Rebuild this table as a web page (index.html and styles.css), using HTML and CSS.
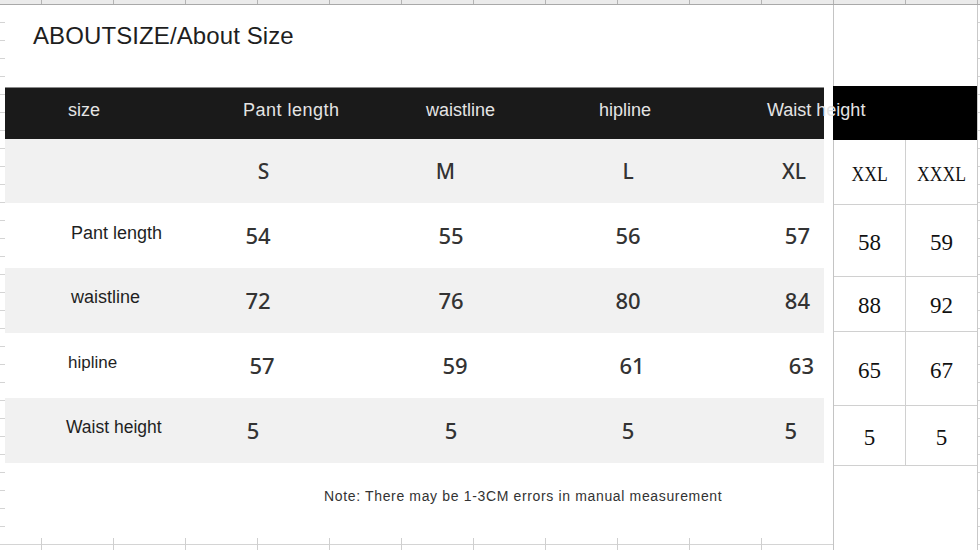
FILE: index.html
```html
<!DOCTYPE html>
<html lang="en">
<head>
<meta charset="utf-8">
<title>About Size</title>
<link rel="stylesheet" href="styles.css">
</head>
<body>
<div class="colhead"></div>
<div class="sheet">
  <section class="chart">
    <h1 class="title">ABOUTSIZE/About Size</h1>
    <div class="thead">
      <span class="th th-size">size</span>
      <span class="th th-pant">Pant length</span>
      <span class="th th-waist">waistline</span>
      <span class="th th-hip">hipline</span>
      <span class="th th-wh">Waist height</span>
    </div>
    <div class="row gray sizes">
      <span class="lab"></span>
      <span class="val">S</span>
      <span class="val">M</span>
      <span class="val">L</span>
      <span class="val last">XL</span>
    </div>
    <div class="row">
      <span class="lab">Pant length</span>
      <span class="val">54</span>
      <span class="val">55</span>
      <span class="val">56</span>
      <span class="val last">57</span>
    </div>
    <div class="row gray">
      <span class="lab">waistline</span>
      <span class="val">72</span>
      <span class="val">76</span>
      <span class="val">80</span>
      <span class="val last">84</span>
    </div>
    <div class="row hip">
      <span class="lab">hipline</span>
      <span class="val">57</span>
      <span class="val">59</span>
      <span class="val">61</span>
      <span class="val last">63</span>
    </div>
    <div class="row gray wh">
      <span class="lab">Waist height</span>
      <span class="val">5</span>
      <span class="val">5</span>
      <span class="val">5</span>
      <span class="val last">5</span>
    </div>
    <p class="note">Note: There may be 1-3CM errors in manual measurement</p>
  </section>
  <section class="side">
    <div class="side-top"></div>
    <div class="side-head"></div>
    <div class="cells">
      <div class="cell r1"><span class="cond">XXL</span></div>
      <div class="cell r1"><span class="cond">XXXL</span></div>
      <div class="cell r2">58</div>
      <div class="cell r2">59</div>
      <div class="cell r3">88</div>
      <div class="cell r3">92</div>
      <div class="cell r4">65</div>
      <div class="cell r4">67</div>
      <div class="cell r5">5</div>
      <div class="cell r5">5</div>
    </div>
  </section>
</div>
</body>
</html>
```

FILE: styles.css
```css
html, body {
  margin: 0;
  padding: 0;
}

body {
  width: 980px;
  height: 550px;
  overflow: hidden;
  background-color: #ffffff;
  background-image:
    linear-gradient(to right, #cfcfcf 1px, transparent 1px),
    linear-gradient(to bottom, #d4d4d4 1px, transparent 1px);
  background-size: 72px 100%, 100% 18px;
  background-position: 41px 0, 0 4px;
  font-family: "Liberation Sans", Arial, sans-serif;
}

.colhead {
  height: 4px;
  border-bottom: 1px solid #a9a9a9;
  background-color: #ebebeb;
  background-image: linear-gradient(to right, #b4b4b4 1px, transparent 1px);
  background-size: 72px 100%;
  background-position: 41px 0;
}

.sheet {
  display: flex;
  align-items: flex-start;
}

/* ---------- size chart picture ---------- */
.chart {
  margin-left: 5px;
  width: 828px;
  height: 533px;
  background: #ffffff;
  display: flex;
  flex-direction: column;
  position: relative;
  z-index: 1;
}

.title {
  margin: 0;
  height: 82px;
  box-sizing: border-box;
  padding: 17px 0 0 28px;
  font-size: 24px;
  line-height: 28px;
  font-weight: 400;
  color: #1e1e1e;
  letter-spacing: 0.1px;
}

.thead {
  width: 819px;
  height: 52px;
  box-sizing: border-box;
  border-top: 1px solid #8a8a8a;
  background: #1a1a1a;
  display: flex;
  align-items: center;
  padding-bottom: 7px;
  white-space: nowrap;
}

.th {
  font-size: 18px;
  line-height: 22px;
  color: #e4e4e4;
  flex: none;
}

.th-size { margin-left: 63px; width: 175px; }
.th-pant { width: 183px; letter-spacing: 0.5px; }
.th-waist { width: 173px; }
.th-hip { width: 168px; }
.th-wh { width: 57px; }

.row {
  width: 819px;
  height: 65px;
  display: grid;
  grid-template-columns: 153px 200px 186px 168px 112px;
  align-items: center;
  background: #ffffff;
}

.row.gray {
  background: #f1f1f1;
}

.row.sizes {
  height: 64px;
}

.lab {
  padding-left: 66px;
  padding-bottom: 5px;
  font-size: 18px;
  line-height: 22px;
  color: #1f1f1f;
  white-space: nowrap;
}

.row.gray .lab { padding-bottom: 7px; }
.row.hip .lab { padding-left: 63px; font-size: 17px; }
.row.wh .lab { padding-left: 61px; font-size: 17.5px; }

.val {
  text-align: center;
  font-family: "Noto Sans", "Open Sans", sans-serif;
  font-size: 22px;
  font-weight: 500;
  line-height: 26px;
  color: #333333;
  padding-bottom: 1px;
}

.row.sizes .val {
  font-size: 21px;
  padding-bottom: 1px;
}

.row.sizes .val:nth-child(2) { padding-left: 11px; }
.row.sizes .val:nth-child(3) { padding-right: 11px; }

.val.last {
  text-align: right;
  padding-right: 14px;
}

.row.hip .val { padding-left: 8px; }
.row.hip .val.last { padding-left: 0; padding-right: 10px; }
.row.sizes .val.last { padding-right: 18px; }
.row.wh .val:nth-child(2) { padding-right: 10px; }
.row.wh .val.last { padding-right: 27px; }

.note {
  margin: 23px 0 0 319px;
  font-size: 14px;
  line-height: 20px;
  letter-spacing: 0.65px;
  color: #333333;
  white-space: nowrap;
}

/* ---------- spreadsheet cells on the right ---------- */
.side {
  width: 143px;
  height: 545px;
  border-left: 1px solid #c4c4c4;
  border-right: 1px solid #c9c9c9;
  background: #ffffff;
  display: flex;
  flex-direction: column;
}

.side-top {
  height: 81px;
}

.side-head {
  height: 54px;
  background: #000000;
  margin-left: -1px;
}

.cells {
  display: grid;
  grid-template-columns: 72px 71px;
  grid-template-rows: 65px 72px 55px 74px 60px;
}

.cell {
  display: flex;
  align-items: center;
  justify-content: center;
  border-bottom: 1px solid #d0d0d0;
  font-family: "Liberation Serif", "Times New Roman", serif;
  font-size: 23px;
  color: #111111;
  padding-top: 4px;
}

.cell:nth-child(odd) {
  border-right: 1px solid #d0d0d0;
}

.cond {
  display: inline-block;
  transform: scaleX(0.8);
  font-size: 22px;
}
```
